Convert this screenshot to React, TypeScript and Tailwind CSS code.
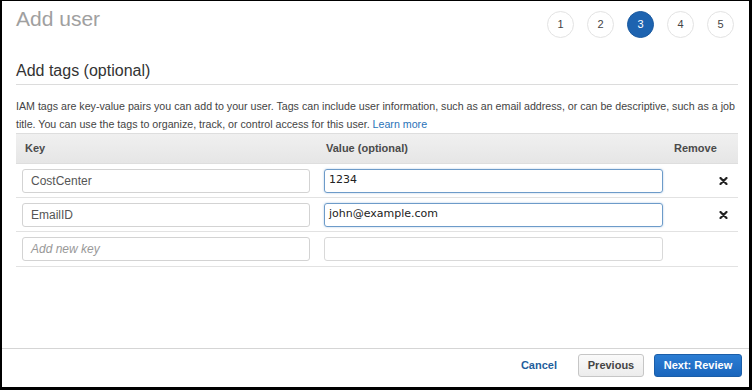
import React from 'react';

const steps = [1, 2, 3, 4, 5];

const rows = [
  { key: 'CostCenter', value: '1234' },
  { key: 'EmailID', value: 'john@example.com' },
];

const XIcon = () => (
  <svg width="9" height="8" viewBox="0 0 9 8">
    <path d="M1.5 1 L7.5 7 M7.5 1 L1.5 7" stroke="#222" strokeWidth="2.2" strokeLinecap="round" />
  </svg>
);

const App = () => {
  return (
    <div
      className="w-[752px] h-[390px] bg-white border-black border-l-2 border-t border-r-[3px] border-b-[3px] flex flex-col text-[#444]"
      style={{ fontFamily: '"Liberation Sans", Arial, sans-serif' }}
    >
      {/* Header */}
      <div className="flex items-start justify-between pl-[14px] pr-[15px] pt-[5px] h-[50px]">
        <h1 className="text-[21px] leading-[26px] text-[#a0a0a0]">Add user</h1>
        <div className="flex gap-[13px] pt-[5px]">
          {steps.map((s) => (
            <div
              key={s}
              className={
                s === 3
                  ? 'w-[27px] h-[27px] rounded-full bg-[#1d63b0] border border-[#1a5aa0] flex items-center justify-center text-[11px] text-white'
                  : 'w-[27px] h-[27px] rounded-full bg-white border border-[#e3e3e3] flex items-center justify-center text-[11px] text-[#444]'
              }
            >
              {s}
            </div>
          ))}
        </div>
      </div>

      {/* Section */}
      <div className="pl-[14px] pr-[11px]">
        <h2 className="text-[16px] leading-[20px] text-[#333] pt-[10px] pb-[3px] border-b border-[#dcdcdc]">
          Add tags (optional)
        </h2>
        <p className="text-[10.66px] leading-[18px] text-[#444] pt-[12px] whitespace-nowrap">
          IAM tags are key-value pairs you can add to your user. Tags can include user information, such as an email address, or can be descriptive, such as a job
          <br />
          title. You can use the tags to organize, track, or control access for this user.{' '}
          <a className="text-[#2a72b8]">Learn more</a>
        </p>

        {/* Table */}
        <div>
          <div className="flex h-[31px] items-center bg-gradient-to-b from-[#f0f0f0] to-[#e6e6e6] border-t border-b border-[#dedede] text-[11px] font-bold text-[#4a4a4a]">
            <div className="w-[300px] pl-[9px]">Key</div>
            <div className="w-[354px] pl-[10px]">Value (optional)</div>
            <div className="flex-1 pl-[4px]">Remove</div>
          </div>

          {rows.map((r) => (
            <div key={r.key} className="flex h-[34px] items-center border-b border-[#e2e2e2]">
              <div className="w-[300px] pl-[6px] pr-[6px]">
                <div className="h-[24px] border border-[#d3d3d3] rounded-[3px] flex items-center pl-[8px] text-[12px] text-[#555]">
                  {r.key}
                </div>
              </div>
              <div className="w-[354px] pl-[8px] pr-[7px]">
                <div
                  className="h-[24px] border border-[#6d9bc9] rounded-[3px] flex items-center pl-[4px] text-[11px] text-[#222] shadow-[0_0_2px_rgba(80,140,200,0.5)]"
                  style={{ fontFamily: '"DejaVu Sans", Verdana, sans-serif' }}
                >
                  {r.value}
                </div>
              </div>
              <div className="flex-1 flex justify-end pr-[10px]">
                <XIcon />
              </div>
            </div>
          ))}

          <div className="flex h-[35px] items-center border-b border-[#e2e2e2]">
            <div className="w-[300px] pl-[6px] pr-[6px]">
              <div className="h-[24px] border border-[#d3d3d3] rounded-[3px] flex items-center pl-[8px] text-[12px] italic text-[#999]">
                Add new key
              </div>
            </div>
            <div className="w-[354px] pl-[8px] pr-[7px]">
              <div className="h-[24px] border border-[#d9d9d9] rounded-[3px]" />
            </div>
            <div className="flex-1" />
          </div>
        </div>
      </div>

      <div className="flex-1" />

      {/* Footer */}
      <div className="h-[39px] border-t border-[#d5d5d5] flex items-start justify-end pt-[5px] pr-[7px]">
        <a className="text-[11px] font-bold text-[#1f5e9c] leading-[23px] mr-[21px]">Cancel</a>
        <button className="h-[23px] w-[66px] rounded-[3px] border border-[#c6c6c6] bg-gradient-to-b from-[#fafafa] to-[#ececec] text-[11px] font-bold text-[#444] mr-[10px]">
          Previous
        </button>
        <button className="h-[23px] w-[88px] rounded-[3px] border border-[#1b5ea8] bg-gradient-to-b from-[#2b7dd3] to-[#1a66bd] text-[11px] font-bold text-white">
          Next: Review
        </button>
      </div>
    </div>
  );
};

export default App;
